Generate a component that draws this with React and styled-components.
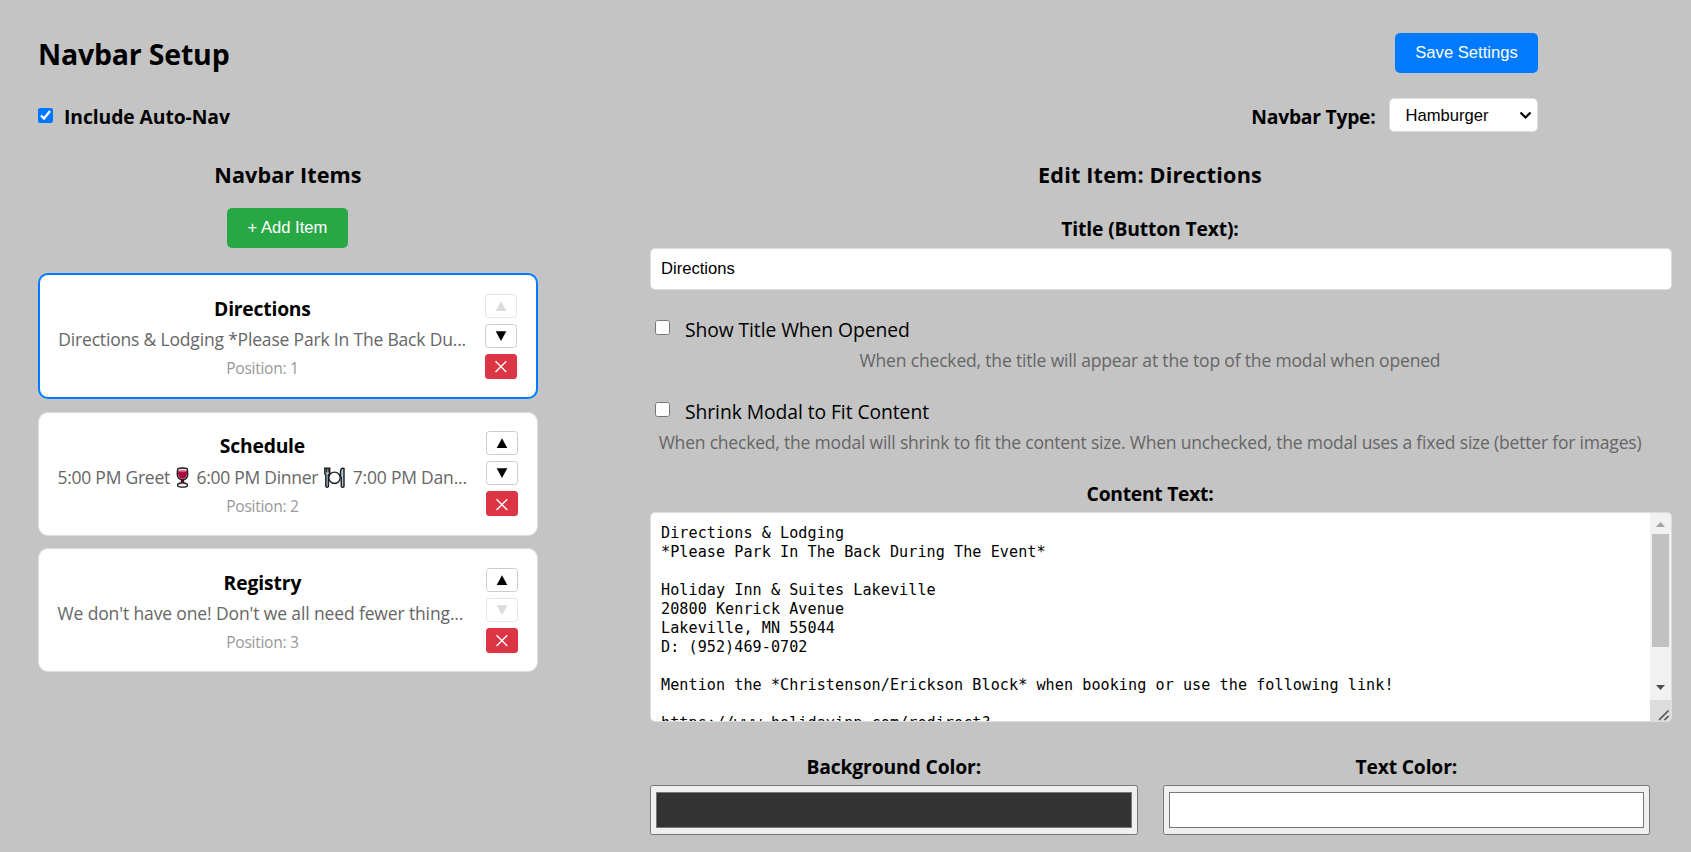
import React, { useState } from "react";
import styled, { createGlobalStyle, css } from "styled-components";

const GlobalStyle = createGlobalStyle`
  html, body { margin: 0; padding: 0; height: 100%; overflow: hidden; }
  body {
    background: #c4c4c4;
    color: #000;
    font-family: "Segoe UI", "Open Sans", "Noto Sans", sans-serif;
  }
  * { box-sizing: border-box; }
`;

const arial = css`font-family: Arial, "Liberation Sans", sans-serif;`;

const Page = styled.main`
  padding: 33px 0 0 38px;
  width: 1691px;
  height: 852px;
  overflow: hidden;
`;

const HeaderRow = styled.header`
  display: flex;
  justify-content: space-between;
  align-items: center;
  width: 1500px;
  height: 40px;
`;

const PageTitle = styled.h1`
  margin: 0;
  padding-top: 2px;
  font-size: 28.5px;
  font-weight: 700;
  line-height: 40px;
  letter-spacing: ${(p) => p.$track}px;
  white-space: nowrap;
`;

const Button = styled.button`
  ${arial}
  display: block;
  height: 40px;
  width: ${(p) => p.$width}px;
  padding: 0 0 1px;
  border: none;
  border-radius: 5px;
  background: ${(p) => (p.$kind === "success" ? "#28a745" : "#007bff")};
  color: #fff;
  font-size: 16.6px;
  white-space: nowrap;
`;

const ControlsRow = styled.div`
  display: flex;
  justify-content: space-between;
  align-items: center;
  width: 1500px;
  height: 34px;
  margin-top: 25px;
`;

const Inline = styled.div`
  display: flex;
  align-items: center;
  gap: ${(p) => p.$gap}px;
`;

const Checkbox = styled.input.attrs({ type: "checkbox" })`
  width: 15px;
  height: 15px;
  margin: 0;
  accent-color: #0075ff;
`;

const FieldLabel = styled.label`
  display: block;
  font-size: 19.3px;
  font-weight: ${(p) => (p.$plain ? 400 : 700)};
  line-height: 27px;
  letter-spacing: ${(p) => p.$track || 0}px;
  text-align: center;
  white-space: nowrap;
`;

const ControlLabel = styled(FieldLabel)`
  padding-top: 3px;
`;

const SelectBox = styled.div`
  ${arial}
  display: flex;
  align-items: center;
  justify-content: space-between;
  width: 149.5px;
  height: 34px;
  padding: 1px 5px 0 16px;
  border: 1px solid #ddd;
  border-radius: 5px;
  background: #fff;
  font-size: 16.6px;
`;

const Columns = styled.div`
  display: flex;
  gap: 112px;
  margin-top: 27px;
`;

const LeftColumn = styled.section`
  display: flex;
  flex-direction: column;
  align-items: center;
  width: 500px;
`;

const RightColumn = styled.section`
  width: 1000px;
`;

const SectionTitle = styled.h2`
  margin: 0;
  padding-top: 1px;
  height: 30px;
  font-size: 21.6px;
  font-weight: 700;
  line-height: 30px;
  letter-spacing: ${(p) => p.$track || 0}px;
  text-align: center;
  white-space: nowrap;
`;

const AddRow = styled.div`
  margin: 19px 1px 25px 0;
  height: 40px;
`;

const CardList = styled.div`
  display: flex;
  flex-direction: column;
  gap: 12.5px;
  width: 500px;
`;

const Card = styled.article`
  display: flex;
  justify-content: space-between;
  padding: 18.5px 19.2px 18.5px 18px;
  border: ${(p) => (p.$active ? "2px solid #007bff" : "1px solid #ddd")};
  border-radius: 10px;
  background: #fff;
`;

const CardInfo = styled.div`
  flex: 1;
  height: 85px;
  margin-right: 18px;
  text-align: center;
  white-space: nowrap;
`;

const CardTitle = styled.div`
  font-size: 19.3px;
  font-weight: 700;
  line-height: 29px;
  letter-spacing: ${(p) => p.$track || 0}px;
`;

const CardText = styled.div`
  display: flex;
  justify-content: center;
  align-items: center;
  padding: ${(p) => (p.$tall ? "1px 0 0" : "0")};
  margin-right: ${(p) => p.$shift || 0}px;
  color: #666;
  font-size: 17.5px;
  line-height: 33px;
  letter-spacing: ${(p) => p.$track || 0}px;
`;

const CardPosition = styled.div`
  color: #999;
  font-size: 15.6px;
  line-height: 25px;
  letter-spacing: -0.3px;
`;

const CardActions = styled.div`
  display: flex;
  flex-direction: column;
  gap: 6px;
`;

const IconButton = styled.button`
  display: flex;
  align-items: center;
  justify-content: center;
  width: 32px;
  height: ${(p) => (p.$danger ? 25 : 24)}px;
  padding: 0;
  border: ${(p) => (p.$danger ? "none" : "1px solid #ccc")};
  border-radius: 3.5px;
  background: ${(p) => (p.$danger ? "#dc3545" : "#fff")};
  color: ${(p) => (p.disabled ? "#b8b8b8" : "#000")};
  opacity: ${(p) => (p.disabled ? 0.5 : 1)};
`;

const TextInput = styled.input`
  ${arial}
  display: block;
  width: 1021.5px;
  height: 42px;
  margin: 6.5px 0 0;
  padding: 0 10px 1px;
  border: 1px solid #ddd;
  border-radius: 5px;
  background: #fff;
  color: #000;
  font-size: 16.6px;
`;

const TitleField = styled.div`
  margin-top: 25.5px;
`;

const OptionField = styled.div`
  margin-top: ${(p) => p.$top}px;
`;

const OptionRow = styled.div`
  display: flex;
  align-items: flex-start;
  gap: 15px;
  height: 28px;
  padding: 4.5px 0 0 5px;
`;

const OptionLabel = styled(FieldLabel)`
  margin-top: -3.5px;
  line-height: 28px;
`;

const Hint = styled.div`
  margin-top: 4.3px;
  color: #666;
  font-size: 17.5px;
  line-height: 25px;
  letter-spacing: ${(p) => p.$track}px;
  text-align: center;
  white-space: nowrap;
`;

const ContentField = styled.div`
  margin-top: 25px;
`;

const TextArea = styled.div`
  display: flex;
  width: 1021.5px;
  height: 210px;
  margin-top: 5px;
  border: 1px solid #ddd;
  border-radius: 5px;
  background: #fff;
  overflow: hidden;
`;

const TextAreaBody = styled.pre`
  flex: 1;
  margin: 0;
  padding: 11px 0 0 10px;
  font-family: Consolas, "DejaVu Sans Mono", monospace;
  font-size: 15.1px;
  line-height: 19px;
  letter-spacing: 0.07px;
`;

const ScrollColumn = styled.div`
  display: flex;
  flex-direction: column;
  width: 21px;
  background: #f1f1f1;
`;

const ScrollArrow = styled.div`
  display: flex;
  align-items: center;
  justify-content: center;
  height: 21px;
  padding: ${(p) => (p.$down ? "0 0 3px" : "2px 0 0")};
`;

const ScrollTrack = styled.div`
  flex: 1;
  padding: 0 2px;
`;

const ScrollThumb = styled.div`
  height: 113px;
  background: #c1c1c1;
`;

const ResizeCorner = styled.div`
  display: flex;
  align-items: flex-end;
  justify-content: flex-end;
  height: 21px;
  padding: 0 1px 0 0;
  background: #dcdcdc;
`;

const ColorRow = styled.div`
  display: flex;
  gap: 25px;
  margin-top: 31.5px;
`;

const ColorField = styled.div`
  flex: 1;
`;

const ColorWell = styled.div`
  height: 50px;
  margin-top: 5px;
  padding: 6px 5px;
  border: 1px solid #767676;
  border-radius: 2.5px;
  background: #efefef;
`;

const Swatch = styled.div`
  height: 100%;
  border: 1px solid #777;
  background: ${(p) => p.$color};
`;

const Segment = styled.span`
  letter-spacing: ${(p) => p.$track}px;
`;

const EmojiSvg = styled.svg`
  display: block;
  flex: none;
  margin: ${(p) => p.$margin};
`;

const Chevron = () => (
  <svg width="13" height="9" viewBox="0 0 13 9">
    <path d="M1.5 1.5 6.5 6.5 11.5 1.5" fill="none" stroke="#000" strokeWidth="2.2" />
  </svg>
);

const Triangle = ({ down }) => (
  <svg width="12" height="12" viewBox="0 0 12 12">
    <path d={down ? "M.7 1.2H11.3L6 11z" : "M.7 11H11.3L6 1.2z"} fill="currentColor" />
  </svg>
);

const Cross = () => (
  <svg width="14" height="14" viewBox="0 0 14 14">
    <path d="M1.5 2.3 12.3 13.1M12.3 2.3 1.5 13.1" stroke="#fff" strokeWidth="1.35" />
  </svg>
);

const Wine = () => (
  <EmojiSvg width="13" height="21" viewBox="0 0 13 21" $margin="0 7px 0 6.5px">
    <path d="M3.7 11.6h5.6L7.600 13v3c2 .2 3.900.9 3.900 2.200 0 1.300-2.200 2-5 2s-5-.7-5-2c0-1.300 1.900-2 3.900-2.200v-3z" fill="#eee" stroke="#1b1b1b" strokeWidth="1.3" />
    <path d="M2 1.500C3.300.8 9.700.8 11 1.500c.7 2 .9 4.500.7 6.300-.3 3-2.500 4.800-5.200 4.800S1.600 10.800 1.300 7.800C1.100 6 1.300 3.500 2 1.500z" fill="#e6dde1" stroke="#1b1b1b" strokeWidth="1.400" />
    <path d="M2.100 4h8.800c.3 4.500-.8 7.700-4.400 7.700S1.800 8.500 2.100 4z" fill="#a8003f" />
    <ellipse cx="6.5" cy="4.3" rx="3.9" ry="1" fill="#d94a77" />
    <path d="M6.500 12v4.500" stroke="#8b0037" strokeWidth="1.300" />
  </EmojiSvg>
);

const Plate = () => (
  <EmojiSvg width="21" height="21" viewBox="0 0 21 21" $margin="0 8px 0 5.5px">
    <circle cx="10.5" cy="10.8" r="5.7" fill="#fff" stroke="#1b1b1b" strokeWidth="1.4" />
    <path d="M.8 1.200v5.500l1 1.300v11.200c0 1.300 2.600 1.300 2.600 0V8l1.300-1.300V1.200z" fill="#a9c8da" stroke="#1b1b1b" strokeWidth="1.400" />
    <path d="M2.500 1v4.500M4.200 1v4.500" stroke="#1b1b1b" strokeWidth="1" />
    <path d="M20 1.500c-2-1-3.500.5-3.500 3.500v4.500l.7 1v8.700c0 1.300 2.800 1.300 2.800 0z" fill="#a9c8da" stroke="#1b1b1b" strokeWidth="1.400" />
  </EmojiSvg>
);

const ResizeGrip = () => (
  <svg width="12" height="12" viewBox="0 0 12 12">
    <path d="M1 11 10.5 1.5M6.5 11 10.5 7" stroke="#505050" strokeWidth="1.6" />
  </svg>
);

const ITEMS = [
  { title: "Directions", track: -0.2, textTrack: -0.18, shift: 0.5, text: "Directions & Lodging *Please Park In The Back Du..." },
  {
    title: "Schedule",
    track: -0.2,
    tall: true,
    shift: 0.5,
    text: (
      <>
        <Segment $track={-0.25}>5:00 PM Greet</Segment>
        <Wine />
        <Segment $track={-0.27}>6:00 PM Dinner</Segment>
        <Plate />
        <Segment $track={-0.2}>7:00 PM Dan...</Segment>
      </>
    ),
  },
  { title: "Registry", track: -0.1, textTrack: -0.13, shift: 4, text: "We don't have one! Don't we all need fewer thing..." },
];

const CONTENT = `Directions & Lodging
*Please Park In The Back During The Event*

Holiday Inn & Suites Lakeville
20800 Kenrick Avenue
Lakeville, MN 55044
D: (952)469-0702

Mention the *Christenson/Erickson Block* when booking or use the following link!

https://www.holidayinn.com/redirect?`;

export default function App() {
  const [autoNav, setAutoNav] = useState(true);
  const [title, setTitle] = useState("Directions");
  const [active, setActive] = useState(0);

  return (
    <>
      <GlobalStyle />
      <Page>
        <HeaderRow>
          <PageTitle $track={-0.2}>Navbar Setup</PageTitle>
          <Button $width={143}>Save Settings</Button>
        </HeaderRow>
        <ControlsRow>
          <Inline $gap={11}>
            <Checkbox checked={autoNav} onChange={(e) => setAutoNav(e.target.checked)} />
            <ControlLabel $track={-0.07}>Include Auto-Nav</ControlLabel>
          </Inline>
          <Inline $gap={13}>
            <ControlLabel $track={-0.25}>Navbar Type:</ControlLabel>
            <SelectBox>
              <span>Hamburger</span>
              <Chevron />
            </SelectBox>
          </Inline>
        </ControlsRow>
        <Columns>
          <LeftColumn>
            <SectionTitle $track={0.1}>Navbar Items</SectionTitle>
            <AddRow>
              <Button $kind="success" $width={121}>+ Add Item</Button>
            </AddRow>
            <CardList>
              {ITEMS.map((item, i) => (
                <Card key={item.title} $active={i === active} onClick={() => setActive(i)}>
                  <CardInfo>
                    <CardTitle $track={item.track}>{item.title}</CardTitle>
                    <CardText $track={item.textTrack} $tall={item.tall} $shift={item.shift}>{item.text}</CardText>
                    <CardPosition>Position: {i + 1}</CardPosition>
                  </CardInfo>
                  <CardActions>
                    <IconButton disabled={i === 0}><Triangle /></IconButton>
                    <IconButton disabled={i === ITEMS.length - 1}><Triangle down /></IconButton>
                    <IconButton $danger><Cross /></IconButton>
                  </CardActions>
                </Card>
              ))}
            </CardList>
          </LeftColumn>
          <RightColumn>
            <SectionTitle $track={0.18}>Edit Item: Directions</SectionTitle>
            <TitleField>
              <FieldLabel $track={-0.15}>Title (Button Text):</FieldLabel>
              <TextInput value={title} onChange={(e) => setTitle(e.target.value)} />
            </TitleField>
            <OptionField $top={25.3}>
              <OptionRow>
                <Checkbox />
                <OptionLabel $plain $track={-0.08}>Show Title When Opened</OptionLabel>
              </OptionRow>
              <Hint $track={-0.17}>When checked, the title will appear at the top of the modal when opened</Hint>
            </OptionField>
            <OptionField $top={24.7}>
              <OptionRow>
                <Checkbox />
                <OptionLabel $plain $track={-0.06}>Shrink Modal to Fit Content</OptionLabel>
              </OptionRow>
              <Hint $track={-0.195}>When checked, the modal will shrink to fit the content size. When unchecked, the modal uses a fixed size (better for images)</Hint>
            </OptionField>
            <ContentField>
              <FieldLabel $track={-0.27}>Content Text:</FieldLabel>
              <TextArea>
                <TextAreaBody>{CONTENT}</TextAreaBody>
                <ScrollColumn>
                  <ScrollArrow>
                    <svg width="9" height="5" viewBox="0 0 9 5"><path d="M0 5 4.5 0 9 5z" fill="#a3a3a3" /></svg>
                  </ScrollArrow>
                  <ScrollTrack><ScrollThumb /></ScrollTrack>
                  <ScrollArrow $down>
                    <svg width="9" height="5" viewBox="0 0 9 5"><path d="M0 0 4.5 5 9 0z" fill="#505050" /></svg>
                  </ScrollArrow>
                  <ResizeCorner><ResizeGrip /></ResizeCorner>
                </ScrollColumn>
              </TextArea>
            </ContentField>
            <ColorRow>
              <ColorField>
                <FieldLabel $track={-0.13}>Background Color:</FieldLabel>
                <ColorWell><Swatch $color="#333" /></ColorWell>
              </ColorField>
              <ColorField>
                <FieldLabel $track={-0.15}>Text Color:</FieldLabel>
                <ColorWell><Swatch $color="#fff" /></ColorWell>
              </ColorField>
            </ColorRow>
          </RightColumn>
        </Columns>
      </Page>
    </>
  );
}
